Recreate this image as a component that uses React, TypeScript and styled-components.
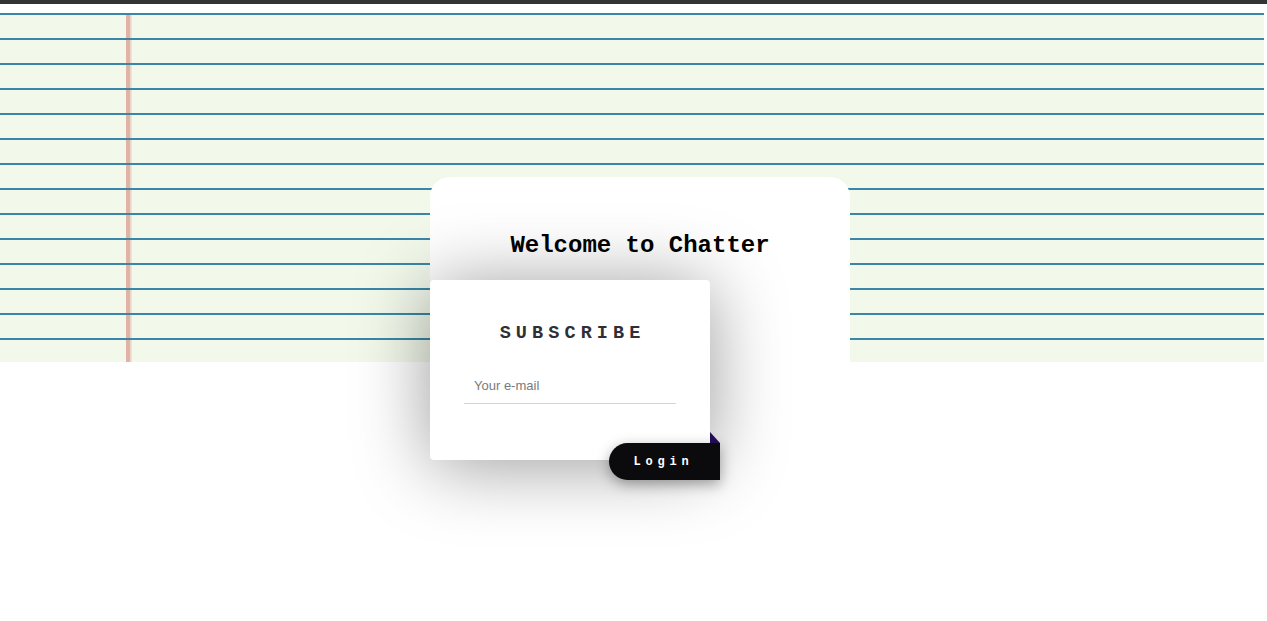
import React from "react";
import styled, { createGlobalStyle } from "styled-components";

const GlobalStyle = createGlobalStyle`
  html, body {
    margin: 0;
    padding: 0;
    background: #ffffff;
  }
  body {
    font-family: "Liberation Sans", Arial, sans-serif;
  }
`;

const Page = styled.div`
  border-top: 4px solid #333333;
  padding-top: 9px;
  min-height: 608px;
`;

const Paper = styled.main`
  width: 1264px;
  height: 349px;
  box-sizing: border-box;
  padding: 164px 0 0 430px;
  background:
    repeating-linear-gradient(
      to bottom,
      #3a86a8 0px,
      #3a86a8 2px,
      transparent 2px,
      transparent 25px
    ),
    linear-gradient(
      to right,
      transparent 126px,
      #e3b2a6 126px,
      #e3b2a6 130px,
      #ecd2c6 130px,
      #f0e6da 132px,
      transparent 132px
    ),
    #f2f9eb;
`;

const Card = styled.section`
  position: relative;
  width: 420px;
  height: 185px;
  background: #ffffff;
  border-radius: 20px 20px 0 0;
  display: flex;
  flex-direction: column;
`;

const Title = styled.h1`
  margin: 55px 0 0;
  text-align: center;
  font-family: "Liberation Mono", "Courier New", monospace;
  font-weight: 700;
  font-size: 24px;
  line-height: 28px;
  color: #000000;
`;

const SubscribeBox = styled.form`
  position: relative;
  margin-top: 20px;
  width: 280px;
  height: 180px;
  flex-shrink: 0;
  box-sizing: border-box;
  background: #ffffff;
  border-radius: 4px;
  box-shadow: 0 5px 75px rgba(0, 0, 0, 0.4);
  display: flex;
  flex-direction: column;
  align-items: center;
  padding-top: 43px;
`;

const SubTitle = styled.h2`
  margin: 0;
  font-family: "Liberation Mono", "Courier New", monospace;
  font-weight: 700;
  font-size: 18.5px;
  line-height: 22px;
  letter-spacing: 5.1px;
  padding-left: 5.1px;
  color: #2f2f36;
`;

const EmailInput = styled.input`
  margin-top: 22px;
  width: 212px;
  height: 37px;
  box-sizing: border-box;
  border: none;
  border-bottom: 1px solid #d4d4d4;
  outline: none;
  padding: 0 10px;
  font-family: "Liberation Sans", Arial, sans-serif;
  font-size: 13px;
  color: #333;
  background: transparent;
  &::placeholder {
    color: #7a7a7a;
  }
`;

const LoginButton = styled.button`
  position: absolute;
  right: -10px;
  bottom: -20px;
  width: 111px;
  height: 37px;
  border: none;
  border-radius: 19px 0 0 19px;
  background: #0b0b0d;
  color: #ffffff;
  font-family: "Liberation Mono", "Courier New", monospace;
  font-weight: 700;
  font-size: 12px;
  letter-spacing: 4.8px;
  padding: 0 2px 0 0;
  box-shadow: 0 4px 14px rgba(0, 0, 0, 0.35);
  cursor: pointer;

  &::before {
    content: "";
    position: absolute;
    right: 0;
    top: -11px;
    width: 0;
    height: 0;
    border-left: 10px solid transparent;
    border-bottom: 11px solid #230a55;
    transform: scaleX(-1);
  }
`;

export default function App() {
  return (
    <>
      <GlobalStyle />
      <Page>
        <Paper>
          <Card>
            <Title>Welcome to Chatter</Title>
            <SubscribeBox onSubmit={(e) => e.preventDefault()}>
              <SubTitle>SUBSCRIBE</SubTitle>
              <EmailInput type="email" placeholder="Your e-mail" />
              <LoginButton type="submit">Login</LoginButton>
            </SubscribeBox>
          </Card>
        </Paper>
      </Page>
    </>
  );
}
